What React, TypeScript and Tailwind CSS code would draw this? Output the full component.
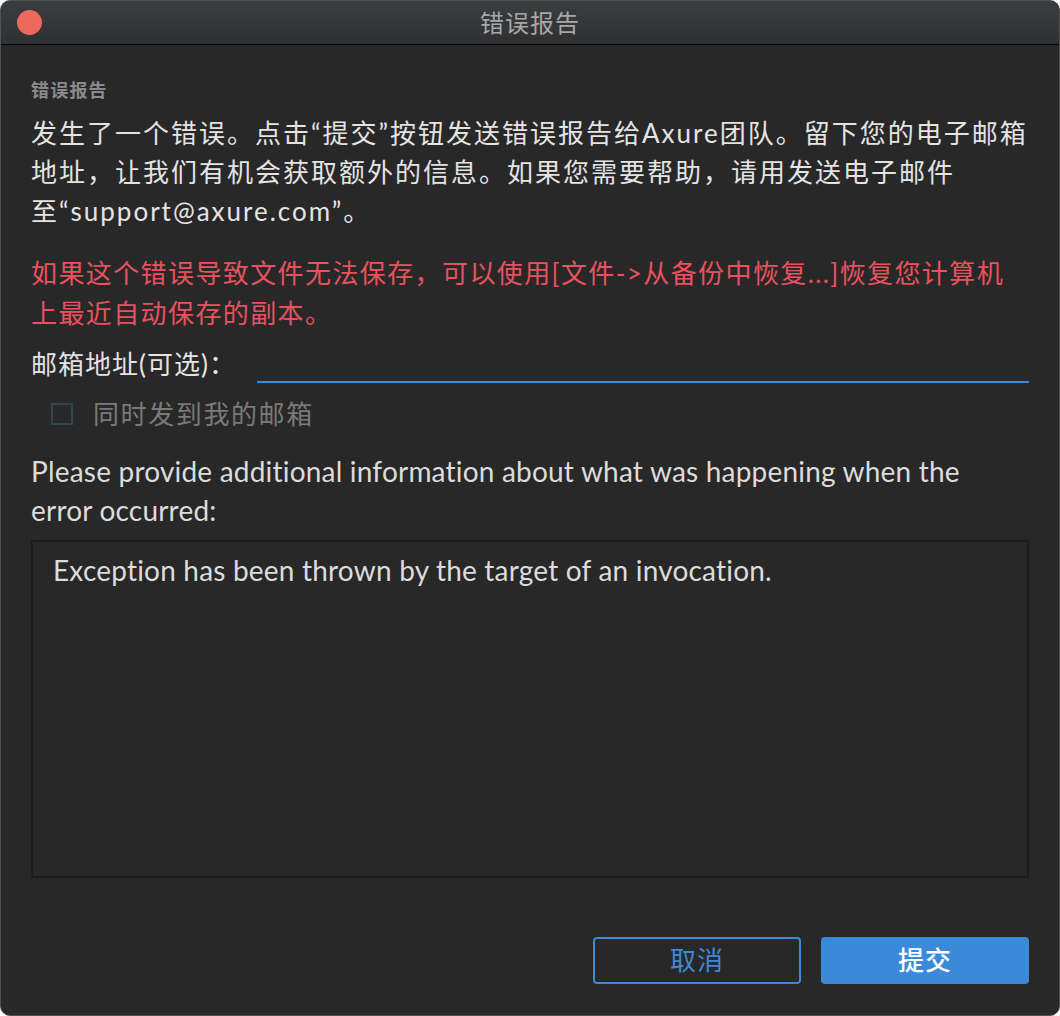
const FONT = "font-['Lato','Noto_Sans_CJK_SC',sans-serif]";

function TitleBar() {
  return (
    <div className="relative flex h-[44px] items-center justify-center border-b border-black bg-gradient-to-b from-[#3b3d3f] to-[#2f3032]">
      <span className="absolute left-[16px] top-[9px] h-[25px] w-[25px] rounded-full bg-[#ee695d]" />
      <span className="text-[24px] tracking-[1px] text-[#a8a8a8]">错误报告</span>
    </div>
  );
}

export default function App() {
  return (
    <div className={`${FONT} h-[1016px] w-[1060px] overflow-hidden rounded-[10px] border border-[#515151] bg-[#282828]`}>
      <TitleBar />
      <div className="flex flex-col px-[30px] pt-[33px]">
        <p className="text-[18px] font-bold leading-[24px] tracking-[1.2px] text-[#8a8a8a]">错误报告</p>

        <p className="mt-[12px] text-[26px] leading-[39px] tracking-[2px] text-[#e4e4e4]">
          发生了一个错误。点击“提交”按钮发送错误报告给Axure团队。留下您的电子邮箱地址，让我们有机会获取额外的信息。如果您需要帮助，请用发送电子邮件至“support@axure.com”。
        </p>

        <p className="mt-[22px] text-[26px] leading-[40px] tracking-[1.4px] text-[#e8525f]">
          如果这个错误导致文件无法保存，可以使用[文件-&gt;从备份中恢复...]恢复您计算机上最近自动保存的副本。
        </p>

        <div className="mt-[11px] flex h-[40px] items-center">
          <span className="w-[226px] text-[26px] tracking-[1px] text-[#e4e4e4]">邮箱地址(可选)：</span>
          <div className="mt-[8px] h-[30px] flex-1 border-b-2 border-[#3b8ad9]" />
        </div>

        <div className="mt-[10px] flex h-[40px] items-center pl-[20px]">
          <span className="h-[22px] w-[22px] border-2 border-[#2d4751]" />
          <span className="ml-[20px] text-[26px] tracking-[1.6px] text-[#7a7a7a]">同时发到我的邮箱</span>
        </div>

        <p className="mt-[18px] max-w-[950px] text-[28px] leading-[39px] tracking-[0.2px] text-[#dcdcdc]">
          Please provide additional information about what was happening when the error occurred:
        </p>

        <div className="mt-[10px] h-[338px] border-2 border-[#1d1d1d] bg-[#282828] px-[20px] pt-[10px]">
          <p className="text-[28px] leading-[36px] tracking-[0.2px] text-[#dcdcdc]">Exception has been thrown by the target of an invocation.</p>
        </div>

        <div className="mt-[59px] flex justify-end gap-[20px]">
          <button className="h-[47px] w-[208px] rounded-[4px] border-2 border-[#3b8ad9] text-[26px] tracking-[1px] text-[#3b8ad9]">取消</button>
          <button className="h-[47px] w-[208px] rounded-[4px] bg-[#3b8ad9] text-[26px] font-medium tracking-[1px] text-white">提交</button>
        </div>
      </div>
    </div>
  );
}
